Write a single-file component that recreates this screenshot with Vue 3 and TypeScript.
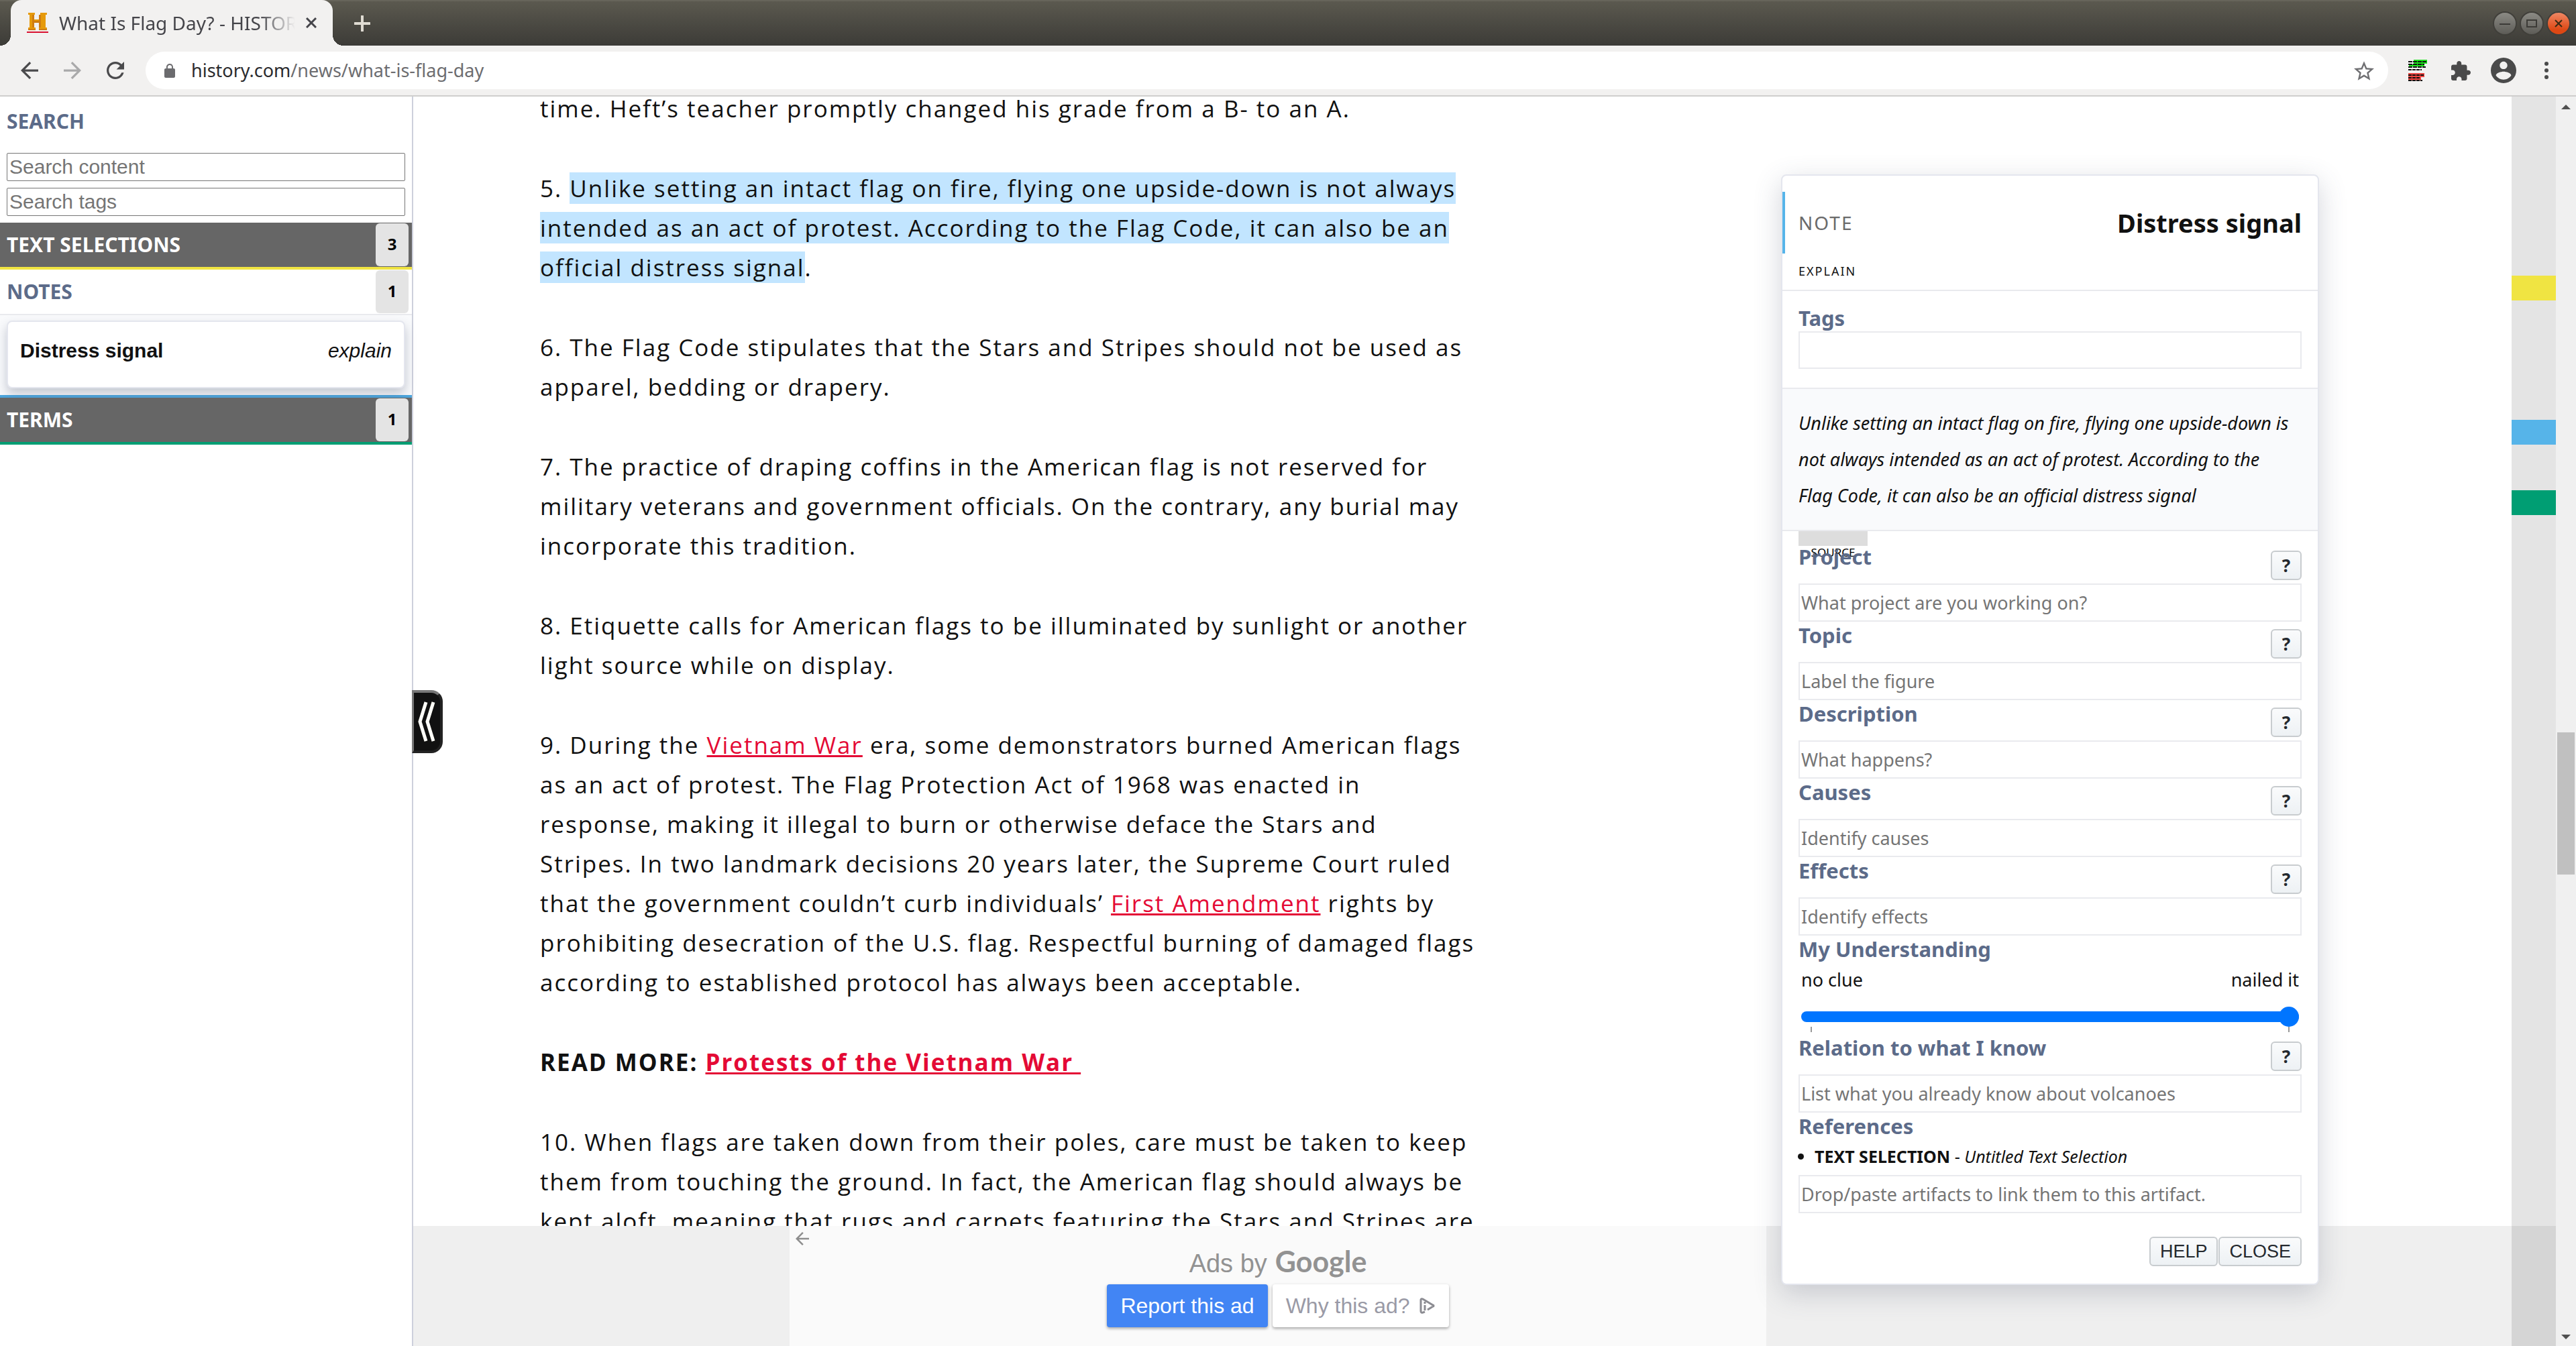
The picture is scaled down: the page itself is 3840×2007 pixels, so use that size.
<script setup lang="ts">
import { ref } from 'vue'

interface Marker {
  name: string
  color: string
  top: number
}

interface Field {
  id: string
  label: string
  placeholder: string
}

const markers: Marker[] = [
  { name: 'Text selection', color: '#f0e442', top: 267 },
  { name: 'Note', color: '#56b4e9', top: 482 },
  { name: 'Term', color: '#009e73', top: 587 },
]

const fields: Field[] = [
  { id: 'project', label: 'Project', placeholder: 'What project are you working on?' },
  { id: 'topic', label: 'Topic', placeholder: 'Label the figure' },
  { id: 'description', label: 'Description', placeholder: 'What happens?' },
  { id: 'causes', label: 'Causes', placeholder: 'Identify causes' },
  { id: 'effects', label: 'Effects', placeholder: 'Identify effects' },
]

const understanding = ref(100)
</script>

<template>
  <div class="browser">
    <header class="titlebar">
      <div class="tab">
        <svg class="favicon" viewBox="0 0 32 30" width="32" height="30">
          <path d="M2 0h10v3h-1v7h10V3h-1V0h10v3h-2v19h2v4H18v-4h3v-7H11v7h2v4H2v-4h2V3H2z" fill="#e69a0b" />
          <path d="M8 3h3v19H8zM18 3h3v19h-3zM11 12h10v3H11zM2 24h11v2H2zM18 24h12v2H18z" fill="#cf7d12" />
          <path d="M0 28h32v2H0z" fill="#d8102f" />
        </svg>
        <span class="tab-title">What Is Flag Day? - HISTORY</span>
        <button class="tab-close" aria-label="Close tab">
          <svg viewBox="0 0 16 16" width="16" height="16"><path d="M1 1l14 14M15 1L1 15" stroke="#45454a" stroke-width="3" /></svg>
        </button>
      </div>
      <button class="new-tab" aria-label="New tab">
        <svg viewBox="0 0 24 24" width="24" height="24"><path d="M12 1v22M1 12h22" stroke="#dfdbd2" stroke-width="4" stroke-linecap="round" /></svg>
      </button>
      <div class="window-buttons">
        <button aria-label="Minimize"><svg viewBox="0 0 32 32" width="32" height="32"><path d="M8 17h16" stroke="#3c3b37" stroke-width="2" /></svg></button>
        <button aria-label="Maximize"><svg viewBox="0 0 32 32" width="32" height="32"><path d="M9 11h14v10H9z" fill="none" stroke="#3c3b37" stroke-width="2" /></svg></button>
        <button class="quit" aria-label="Close window"><svg viewBox="0 0 32 32" width="32" height="32"><path d="M11 11l10 10M21 11L11 21" stroke="#3a2b14" stroke-width="2" /></svg></button>
      </div>
    </header>

    <nav class="toolbar">
      <button aria-label="Back"><svg viewBox="4 4 16 16" width="26" height="26"><path fill="#4a4a4c" d="M20 11H7.83l5.59-5.59L12 4l-8 8 8 8 1.41-1.41L7.83 13H20v-2z" /></svg></button>
      <button class="forward" aria-label="Forward"><svg viewBox="4 4 16 16" width="26" height="26"><path fill="#a9a9aa" d="M4 13h12.17l-5.59 5.59L12 20l8-8-8-8-1.41 1.41L16.17 11H4v2z" /></svg></button>
      <button class="reload" aria-label="Reload"><svg viewBox="4 4 16 16" width="26" height="26"><path fill="#4a4a4c" d="M17.65 6.35C16.2 4.9 14.21 4 12 4c-4.42 0-7.99 3.58-7.99 8s3.57 8 7.99 8c3.73 0 6.84-2.55 7.73-6h-2.08c-.82 2.33-3.04 4-5.65 4-3.31 0-6-2.69-6-6s2.69-6 6-6c1.66 0 3.14.69 4.22 1.78L13 11h7V4l-2.35 2.35z" /></svg></button>
      <div class="omnibox">
        <svg viewBox="4 1 16 21" width="16" height="21"><path fill="#6b6b6e" d="M18 8h-1V6c0-2.76-2.24-5-5-5S7 3.24 7 6v2H6c-1.1 0-2 .9-2 2v10c0 1.1.9 2 2 2h12c1.1 0 2-.9 2-2V10c0-1.1-.9-2-2-2zm-2.9 0H8.9V6c0-1.71 1.39-3.1 3.1-3.1 1.71 0 3.1 1.39 3.1 3.1v2z" /></svg>
        <span class="url"><b>history.com</b>/news/what-is-flag-day</span>
        <button aria-label="Bookmark"><svg viewBox="2 2 20 19" width="30" height="29"><path fill="#6f6f72" d="M22 9.24l-7.19-.62L12 2 9.19 8.63 2 9.24l5.46 4.73L5.82 21 12 17.27 18.18 21l-1.63-7.03L22 9.24zM12 15.4l-3.76 2.27 1-4.28-3.32-2.88 4.38-.38L12 6.1l1.71 4.04 4.38.38-3.32 2.88 1 4.28L12 15.4z" /></svg></button>
      </div>
      <button class="annotator" aria-label="Annotation extension">
        <svg viewBox="0 0 28 32" width="28" height="32">
          <path d="M8 0h20v6h-4v4H1V7h7z" fill="#1ce41c" />
          <path d="M0 20h24v6h-5v5H0z" fill="#ee4540" />
          <g stroke="#111" stroke-width="2">
            <path d="M0 3h27M0 7h24M0 11h26" stroke-dasharray="6 1" />
            <path d="M0 15h20M0 23h23" stroke-dasharray="5 1" />
            <path d="M0 27h18M0 31h21" stroke-dasharray="5 1" />
          </g>
        </svg>
      </button>
      <button class="extensions" aria-label="Extensions"><svg viewBox="2 1 21 21" width="29" height="29"><path fill="#4a4a4a" d="M20.5 11H19V7c0-1.1-.9-2-2-2h-4V3.5C13 2.12 11.88 1 10.5 1S8 2.12 8 3.5V5H4c-1.1 0-1.99.9-1.99 2v3.8H3.5c1.49 0 2.7 1.21 2.7 2.7s-1.21 2.7-2.7 2.7H2V20c0 1.1.9 2 2 2h3.8v-1.5c0-1.49 1.21-2.7 2.7-2.7 1.49 0 2.7 1.21 2.7 2.7V22H17c1.1 0 2-.9 2-2v-4h1.5c1.38 0 2.5-1.12 2.5-2.5S21.88 11 20.5 11z" /></svg></button>
      <button class="profile" aria-label="Profile"><svg viewBox="2 2 20 20" width="38" height="38"><path fill="#4a4a4a" d="M12 2C6.48 2 2 6.48 2 12s4.48 10 10 10 10-4.48 10-10S17.52 2 12 2zm0 3c1.66 0 3 1.34 3 3s-1.34 3-3 3-3-1.34-3-3 1.34-3 3-3zm0 14.2c-2.5 0-4.71-1.28-6-3.22.03-1.99 4-3.08 6-3.08 1.99 0 5.97 1.09 6 3.08-1.29 1.94-3.5 3.22-6 3.22z" /></svg></button>
      <button class="more" aria-label="Menu"><svg viewBox="0 0 8 28" width="8" height="28"><g fill="#4a4a4a"><circle cx="4" cy="4" r="3" /><circle cx="4" cy="14" r="3" /><circle cx="4" cy="24" r="3" /></g></svg></button>
    </nav>

    <div class="page">
      <aside class="sidebar">
        <h2>SEARCH</h2>
        <div class="search">
          <input type="text" placeholder="Search content" aria-label="Search content" />
          <input type="text" placeholder="Search tags" aria-label="Search tags" />
        </div>
        <section class="group yellow">
          <h3>TEXT SELECTIONS <span class="count">3</span></h3>
        </section>
        <section class="group open blue">
          <h3>NOTES <span class="count">1</span></h3>
          <div class="cards">
            <article class="card"><b>Distress signal</b><i>explain</i></article>
          </div>
        </section>
        <section class="group green">
          <h3>TERMS <span class="count">1</span></h3>
        </section>
        <button class="collapse" aria-label="Collapse sidebar">
          <svg viewBox="0 0 26 60" width="26" height="60"><path d="M12 1L3 30l9 29M23 1l-9 29 9 29" fill="none" stroke="#fffff8" stroke-width="5" /></svg>
        </button>
      </aside>

      <main class="article">
        <p>time. Heft’s teacher promptly changed his grade from a B- to an A.</p>
        <p>5. <mark>Unlike setting an intact flag on fire, flying one upside-down is not always intended as an act of protest. According to the Flag Code, it can also be an official distress signal</mark>.</p>
        <p>6. The Flag Code stipulates that the Stars and Stripes should not be used as apparel, bedding or drapery.</p>
        <p>7. The practice of draping coffins in the American flag is not reserved for military veterans and government officials. On the contrary, any burial may incorporate this tradition.</p>
        <p>8. Etiquette calls for American flags to be illuminated by sunlight or another light source while on display.</p>
        <p>9. During the <a href="#vietnam-war">Vietnam War</a> era, some demonstrators burned American flags as an act of protest. The Flag Protection Act of 1968 was enacted in response, making it illegal to burn or otherwise deface the Stars and Stripes.&nbsp;In two landmark decisions 20 years later, the Supreme Court ruled that the government couldn’t curb individuals’ <a href="#first-amendment">First Amendment</a> rights by prohibiting desecration of the U.S. flag. Respectful burning of damaged flags according to established protocol has always been acceptable.</p>
        <p><strong>READ MORE: <a href="#protests">Protests of the Vietnam War&nbsp;</a></strong></p>
        <p>10. When flags are taken down from their poles, care must be taken to keep them from touching the ground. In fact, the American flag should always be kept aloft, meaning that rugs and carpets featuring the Stars and Stripes are</p>
      </main>

      <div class="ad-bar">
        <div class="ad">
          <button class="ad-back" aria-label="Back">
            <svg viewBox="4 4 16 16" width="20" height="20"><path fill="#8e8e8e" d="M20 11H7.83l5.59-5.59L12 4l-8 8 8 8 1.41-1.41L7.83 13H20v-2z" /></svg>
          </button>
          <div class="ad-by">Ads by <span>Google</span></div>
          <div class="ad-actions">
            <button class="report">Report this ad</button>
            <button class="why">Why this ad?
              <svg viewBox="0 0 24 26" width="24" height="26"><path d="M8 22l-3 1a2 2 0 0 1-3-2V4a2 2 0 0 1 3-1l15 9a1 1 0 0 1 0 2l-8 5" fill="none" stroke="#8c8c92" stroke-width="3" /><path d="M8 12v8M8 7v3" stroke="#8c8c92" stroke-width="3" /></svg>
            </button>
          </div>
        </div>
      </div>

      <div class="overview">
        <span v-for="m in markers" :key="m.name" class="marker" :style="{ top: m.top + 'px', background: m.color }"></span>
      </div>
      <div class="scrollbar">
        <svg viewBox="0 0 14 7" width="14" height="7"><path d="M7 0l7 7H0z" fill="#505050" /></svg>
        <span class="thumb"></span>
        <svg class="down" viewBox="0 0 14 7" width="14" height="7"><path d="M0 0h14L7 7z" fill="#505050" /></svg>
      </div>

      <section class="panel">
        <header class="panel-head">
          <div class="panel-title"><span>NOTE</span><h2>Distress signal</h2></div>
          <div class="kind">EXPLAIN</div>
        </header>
        <div class="tags">
          <label for="tags">Tags</label>
          <input id="tags" type="text" />
        </div>
        <blockquote>Unlike setting an intact flag on fire, flying one upside-down is not always intended as an act of protest. According to the Flag Code, it can also be an official distress signal</blockquote>
        <div class="form">
          <div class="source-slot">
            <button class="source">SOURCE</button>
          </div>
          <div v-for="f in fields" :key="f.id" class="field">
            <div class="field-head"><label :for="f.id">{{ f.label }}</label><button class="help">?</button></div>
            <input :id="f.id" type="text" :placeholder="f.placeholder" />
          </div>
          <label for="understanding">My Understanding</label>
          <div class="scale"><span>no clue</span><span>nailed it</span></div>
          <input id="understanding" v-model="understanding" class="range" type="range" min="0" max="100" />
          <div class="ticks"><span></span><span></span></div>
          <div class="field">
            <div class="field-head"><label for="relation">Relation to what I know</label><button class="help">?</button></div>
            <input id="relation" type="text" placeholder="List what you already know about volcanoes" />
          </div>
          <label for="references">References</label>
          <ul class="refs">
            <li><b>TEXT SELECTION</b> - <i>Untitled Text Selection</i></li>
          </ul>
          <input id="references" type="text" placeholder="Drop/paste artifacts to link them to this artifact." />
        </div>
        <footer class="panel-actions">
          <button>HELP</button>
          <button>CLOSE</button>
        </footer>
      </section>
    </div>
  </div>
</template>

<style>
body {
  margin: 0;
  overflow: hidden;
}
</style>

<style scoped>
* {
  box-sizing: border-box;
}
button {
  display: block;
  padding: 0;
  border: 0;
  background: none;
  font: inherit;
}
svg {
  display: block;
}
h2,
h3,
p,
ul,
blockquote {
  margin: 0;
}
.browser {
  display: flex;
  flex-direction: column;
  height: 100vh;
  background: #fff;
  color: #111;
  font-family: "Noto Sans", sans-serif;
}

/* window chrome */
.titlebar {
  display: flex;
  align-items: center;
  height: 68px;
  flex: none;
  padding: 0 10px 0 16px;
  border-top: 2px solid #66645a;
  background: linear-gradient(#5b594f, #3c3b37);
}
.tab {
  position: relative;
  display: flex;
  align-items: center;
  width: 480px;
  height: 68px;
  margin-top: -2px;
  padding: 0 24px;
  border-radius: 16px 16px 0 0;
  background: #f2f1f0;
}
.tab::before,
.tab::after {
  content: "";
  position: absolute;
  bottom: 0;
  width: 16px;
  height: 16px;
}
.tab::before {
  right: 100%;
  background: radial-gradient(circle at 0 0, transparent 16px, #f2f1f0 16px);
}
.tab::after {
  left: 100%;
  background: radial-gradient(circle at 100% 0, transparent 16px, #f2f1f0 16px);
}
.tab-title {
  flex: 1;
  margin: 0 16px;
  overflow: hidden;
  white-space: nowrap;
  color: #45454a;
  font-size: 28px;
  line-height: 40px;
  -webkit-mask-image: linear-gradient(90deg, #000 85%, transparent);
  mask-image: linear-gradient(90deg, #000 85%, transparent);
}
.new-tab {
  margin-left: 32px;
}
.window-buttons {
  display: flex;
  gap: 8px;
  margin-left: auto;
}
.window-buttons button {
  border-radius: 50%;
  background: linear-gradient(#8b8a84, #5d5c57);
  box-shadow: 0 0 0 2px #403f3a;
}
.window-buttons .quit {
  background: linear-gradient(#f08763, #dd4814 80%);
}
.toolbar {
  display: flex;
  align-items: center;
  height: 76px;
  flex: none;
  padding: 0 40px 0 31px;
  border-bottom: 2px solid #cfcecd;
  background: #f2f1f0;
}
.forward {
  margin-left: 38px;
}
.reload {
  margin: 0 32px 0 38px;
}
.omnibox {
  display: flex;
  align-items: center;
  flex: 1;
  height: 56px;
  padding: 0 21px 0 28px;
  border-radius: 28px;
  background: #fff;
}
.url {
  flex: 1;
  margin-left: 24px;
  color: #6d6d70;
  font-size: 27px;
  line-height: 40px;
}
.url b {
  color: #2b2b2e;
  font-weight: 400;
}
.annotator {
  margin: 0 36px 0 30px;
}
.profile {
  margin: 0 41px 0 30px;
}

/* page area */
.page {
  position: relative;
  display: flex;
  flex: 1;
  min-height: 0;
}
.sidebar {
  position: relative;
  z-index: 2;
  width: 616px;
  flex: none;
  border-right: 2px solid #cdd0dc;
  background: #fff;
}
.sidebar h2 {
  padding: 7px 10px 17px;
  color: #5c6b89;
  font-size: 30px;
  line-height: 60px;
}
.search {
  display: flex;
  flex-direction: column;
  gap: 10px;
  padding: 0 10px 10px;
}
.search input {
  width: 100%;
  height: 42px;
  padding: 0 3px;
  border: 1px solid #767676;
  border-radius: 2px;
  font-family: "Liberation Sans", sans-serif;
  font-size: 30px;
}
input::placeholder {
  color: #757575;
  opacity: 1;
}
.group {
  border-bottom: 4px solid;
}
.group h3 {
  display: flex;
  align-items: center;
  justify-content: space-between;
  height: 66px;
  padding: 0 5px 0 10px;
  background: #666;
  color: #fff;
  font-size: 30px;
  line-height: 66px;
}
.group.open h3 {
  height: 68px;
  border-bottom: 2px solid #e9eaee;
  background: #fff;
  color: #5c6b89;
}
.yellow {
  border-color: #f0e442;
}
.blue {
  border-color: #4da6dd;
}
.green {
  border-color: #009e73;
}
.count {
  width: 49px;
  height: 64px;
  border-radius: 6px;
  background: #e4e4e4;
  color: #000;
  font-size: 24px;
  line-height: 62px;
  text-align: center;
}
.cards {
  padding: 8px 10px 10px;
  background: #f9fafc;
}
.card {
  display: flex;
  justify-content: space-between;
  padding: 25px 18px 36px;
  border: 2px solid #e4e6ee;
  border-radius: 8px;
  background: #fff;
  box-shadow: 0 8px 16px rgba(70, 80, 105, 0.3);
  font-family: "Liberation Sans", sans-serif;
  font-size: 30px;
  line-height: 36px;
}
.collapse {
  position: absolute;
  top: 885px;
  left: 100%;
  width: 46px;
  height: 94px;
  padding: 0 0 0 6px;
  border: 4px solid;
  border-color: #777 #222 #222 #777;
  border-left-width: 3px;
  border-radius: 0 17px 17px 0;
  background: #111;
}

/* article */
.article {
  flex: 1;
  overflow: hidden;
  padding: 0 0 0 189px;
  font-family: "Open Sans", sans-serif;
  font-size: 35px;
  line-height: 59px;
  letter-spacing: 2px;
}
.article p {
  width: 1408px;
  margin-bottom: 60px;
}
.article p:first-child {
  margin-top: -12px;
}
.article mark {
  background: #c2e5ff;
  color: inherit;
}
.article a {
  color: #e40a35;
  text-decoration: underline;
}

/* sticky advertisement */
.ad-bar {
  position: absolute;
  z-index: 1;
  right: 30px;
  bottom: 0;
  left: 0;
  display: flex;
  justify-content: center;
  height: 179px;
  background: #efefef;
  font-family: "Liberation Sans", sans-serif;
}
.ad {
  position: relative;
  display: flex;
  flex-direction: column;
  align-items: center;
  width: 1456px;
  padding-top: 31px;
  background: #fafafa;
}
.ad-back {
  position: absolute;
  top: 9px;
  left: 9px;
}
.ad-by {
  display: flex;
  gap: 12px;
  align-items: baseline;
  height: 56px;
  color: #929292;
  font-size: 38px;
  line-height: 44px;
}
.ad-by span {
  font-family: Lato, sans-serif;
  font-size: 43px;
  font-weight: 700;
}
.ad-actions {
  display: flex;
  gap: 7px;
}
.ad-actions button {
  display: flex;
  align-items: center;
  height: 64px;
  border-radius: 4px;
  box-shadow: 0 2px 4px rgba(0, 0, 0, 0.35);
  font-size: 32px;
}
.ad-actions .report {
  padding: 0 20px;
  background: #4285f4;
  color: #fff;
}
.ad-actions .why {
  gap: 14px;
  padding: 0 20px;
  background: #fff;
  color: #9a9aa6;
}

/* overview ruler and scrollbar */
.overview {
  position: relative;
  z-index: 2;
  width: 66px;
  flex: none;
  background: rgba(0, 0, 0, 0.106);
}
.marker {
  position: absolute;
  left: 0;
  width: 100%;
  height: 37px;
}
.scrollbar {
  display: flex;
  flex-direction: column;
  align-items: center;
  width: 30px;
  flex: none;
  padding: 12px 0 10px;
  background: #f0f0f0;
}
.thumb {
  width: 26px;
  height: 212px;
  margin-top: 929px;
  background: #c0c0c0;
}
.down {
  margin-top: auto;
}

/* note editor */
.panel {
  position: absolute;
  z-index: 3;
  top: 116px;
  right: 383px;
  width: 802px;
  border: 2px solid #e4e6ee;
  border-radius: 8px;
  background: #fff;
  box-shadow: 0 12px 40px rgba(70, 80, 105, 0.24);
}
.panel-head {
  padding: 24px 0 12px;
  border-bottom: 2px solid #e9eaee;
}
.panel-title {
  display: flex;
  align-items: center;
  justify-content: space-between;
  height: 92px;
  padding: 0 24px 0 20px;
  border-left: 4px solid #56b4e9;
}
.panel-title span {
  color: #6b6b6b;
  font-size: 28px;
  letter-spacing: 2px;
}
.panel-title h2 {
  font-size: 38px;
}
.kind {
  margin-top: 10px;
  padding: 0 24px;
  font-size: 18px;
  line-height: 32px;
  letter-spacing: 2px;
}
.tags {
  padding: 20px 24px 28px;
  border-bottom: 2px solid #e9eaee;
}
.panel label {
  display: block;
  position: relative;
  color: #5c6b89;
  font-size: 31px;
  font-weight: 700;
  line-height: 40px;
}
.panel input[type="text"] {
  display: block;
  width: 100%;
  height: 57px;
  padding: 0 2px;
  border: 2px solid #e9eaee;
  background: #fff;
  font-family: inherit;
  font-size: 27px;
}
.panel .tags input[type="text"] {
  height: 56px;
}
.panel blockquote {
  padding: 24px 32px 24px 24px;
  border-bottom: 2px solid #e9eaee;
  background: #f9fafc;
  font-size: 27px;
  font-style: italic;
  line-height: 54px;
}
.form {
  padding: 0 24px;
}
.source-slot {
  height: 18px;
}
.source {
  width: 103px;
  padding-top: 22px;
  background: linear-gradient(#ddd, #ddd) top / 100% 22px no-repeat;
  font-size: 17px;
  line-height: 20px;
}
.field-head {
  display: flex;
  align-items: flex-start;
  justify-content: space-between;
  height: 60px;
}
.help,
.panel-actions button {
  border: 2px solid #c8cccf;
  border-radius: 6px;
  background: linear-gradient(#fafbfc, #edf1f4);
  color: #24292e;
}
.help {
  width: 46px;
  height: 44px;
  margin-top: 11px;
  font-size: 26px;
  font-weight: 700;
  line-height: 38px;
}
.scale {
  display: flex;
  justify-content: space-between;
  padding: 0 4px;
  font-size: 27px;
  line-height: 52px;
}
.range {
  appearance: none;
  display: block;
  width: calc(100% - 8px);
  height: 30px;
  margin: 14px 4px 0;
  background: none;
}
.range::-webkit-slider-runnable-track {
  height: 16px;
  border-radius: 8px;
  background: #0075ff;
}
.range::-webkit-slider-thumb {
  appearance: none;
  width: 30px;
  height: 30px;
  margin-top: -7px;
  border-radius: 50%;
  background: #0075ff;
}
.ticks {
  display: flex;
  justify-content: space-between;
  padding: 0 18px 3px;
}
.ticks span {
  width: 2px;
  height: 8px;
  background: #999;
}
.refs {
  padding: 0 0 3px 24px;
  font-size: 25px;
  line-height: 50px;
}
.panel-actions {
  display: flex;
  justify-content: flex-end;
  gap: 1px;
  padding: 35px 24px 26px;
}
.panel-actions button {
  height: 44px;
  padding: 0 14px;
  font-family: "Liberation Sans", sans-serif;
  font-size: 27px;
}
</style>
